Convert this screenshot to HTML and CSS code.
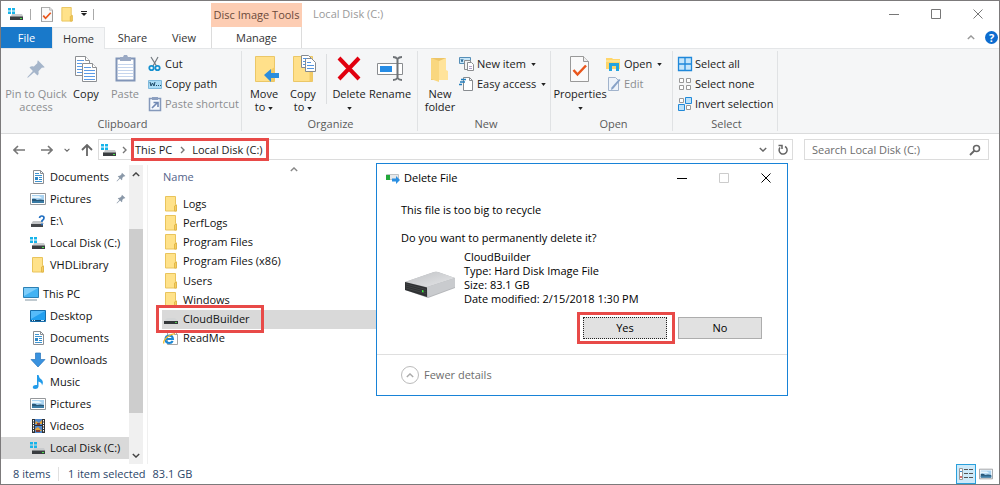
FILE: index.html
```html
<!DOCTYPE html>
<html lang="en">
<head>
<meta charset="utf-8">
<title>Local Disk (C:)</title>
<link rel="stylesheet" href="styles.css">
</head>
<body>
<svg class="sprite" aria-hidden="true">
  <symbol id="disk" viewBox="0 0 16 16">
    <path fill="#c9cbcd" d="M4 8h10l1 2H3z"/><path fill="#3a3d40" d="M2 10h13v4H2z"/><path fill="#85888a" d="M2 10h13v1H2z"/><path fill="#4be34b" d="M12 12h2v1h-2z"/>
    <path fill="#17b4ea" d="M0 2h3v2.500H0zM4 2h3v2.500H4zM0 5.500h3V8H0zM4 5.500h3V8H4z"/>
  </symbol>
  <symbol id="drive" viewBox="0 0 16 16"><path fill="#d3d5d6" d="M4 7h8l3 3H1z"/><path fill="#34383a" d="M1 10h14v3H1z"/><path fill="#50c750" d="M12 11h2v1h-2z"/></symbol>
  <symbol id="drive-q" viewBox="0 0 16 16">
    <path fill="#c4c6c8" d="M3 8h9l2 3H1z"/><path fill="#45484b" d="M1 11h12v3H1z"/>
    <path d="M9.500 5q.3-2 2.300-2 2.200 0 2.200 2 0 1.300-2 2.700v1.300M12 10.500v1.700" fill="none" stroke="#1e6dc0" stroke-width="1.700"/>
  </symbol>
  <symbol id="folder" viewBox="0 0 16 16"><path d="M2.500.5h10v8.200l1 .3v6h-11z" fill="#ffe28a" stroke="#e9c45c"/><path d="M11.500 15v-5l2-1v6z" fill="#f6cd63" stroke="#e2b84a"/></symbol>
  <symbol id="doc" viewBox="0 0 16 16"><path d="M3.500 1.500h7l3 3v10h-10z" fill="#fff" stroke="#8b8f94"/><path d="M10.500 1.500v3h3" fill="none" stroke="#8b8f94"/><path d="M5 4.500h4M5 6.500h7M9 8.500h3M5 12.500h7" stroke="#3f94d0"/><path d="M5 8h3v3H5zM9 10h3v1H9z" fill="#2d87c8"/></symbol>
  <symbol id="picture" viewBox="0 0 16 16"><path d="M.5 2.500h15v11H.5z" fill="#fff" stroke="#95989b"/><path fill="#a9d3f1" d="M2 4h12v8H2z"/><path fill="#e9f6fd" d="M2 5h7l3 2H2z"/><path fill="#2a5878" d="M2 8q3-1 5 1 3-1 7 0v3H2z"/><path fill="#397ba5" d="M2 10h12v2H2z"/></symbol>
  <symbol id="monitor" viewBox="0 0 16 16"><path d="M.5 1.500h15v10H.5z" fill="#43b3f3" stroke="#2c80b4"/><path fill="#7dcdfa" d="M1 2h14L1 10z"/><path fill="#8194a1" d="M2 13.500h12v1H2z"/></symbol>
  <symbol id="desktop" viewBox="0 0 16 16"><path d="M.5 2.500h15v11H.5z" fill="#23a0f0" stroke="#176fae"/><path fill="#56bbfa" d="M1 3h14L1 11z"/><path d="M1 12.500h14" stroke="#10466f"/><path d="M2 12.500h1m1 0h1m6 0h3" stroke="#d1edff"/></symbol>
  <symbol id="down" viewBox="0 0 16 16"><path d="M5.500 1h5v6.500h4.500L8 15 1 7.500h4.500z" fill="#3992df" stroke="#2875bc" stroke-width=".7"/></symbol>
  <symbol id="music" viewBox="0 0 16 16"><path d="M7 1h1.500q.5 3 3 4.500 2.500 2.500.5 6 .1-3-3.500-4v5Q8 15 5 15q-2.500-.2-2.300-2Q3.200 10.500 7 11z" fill="#229bea"/></symbol>
  <symbol id="video" viewBox="0 0 16 16"><path fill="#303234" d="M2 1h13v14H2z"/><path d="M3.500 2v12M13.500 2v12" stroke="#fff" stroke-dasharray="1.500 1"/><path fill="#5189ce" d="M5 1h7v6H5zM5 8h7v7H5z"/><path fill="#e3a43b" d="M6 3l3 2 3-3v4H5zM5 11l3-2 4 4H6z"/><path fill="#823c31" d="M7 5h3v2H7zM6 12h4v2H6z"/></symbol>
  <symbol id="pin" viewBox="0 0 16 16"><path d="M9.500 1l5.500 5.500-1.500.5-.7-.2L10 9.700q.6 2.300-.8 3.500L6.500 10.500 1.500 15l-.5-.5 4.500-5L2.800 6.800Q4 5.400 6.300 6l2.900-2.800L9 2.500z" fill="currentColor"/></symbol>
  <symbol id="ie" viewBox="0 0 16 16"><path d="M4.500 1.500h7l3 3v10h-10z" fill="#fff" stroke="#a6a6a6"/><path d="M11.500 1.500v3h3" fill="none" stroke="#a6a6a6"/><path d="M2.600 9h7.400Q9.700 5.500 6.300 5.500 2.500 5.700 2.500 9.300 2.800 13 6.300 13q2.500 0 3.400-2" fill="none" stroke="#1a86d3" stroke-width="2"/><path d="M1 13.500Q-.5 11 5 6.500 10 2.800 12 4.200" fill="none" stroke="#f1b92b" stroke-width="1.300"/></symbol>
  <symbol id="checkdoc" viewBox="0 0 20 26"><path d="M.5.5h14l5 5v20H.5z" fill="#fafafa" stroke="#8a8a8a" stroke-width="1.500"/><path d="M14.500.5v5h5" fill="#e8e8e8" stroke="#9a9a9a"/><path d="M3.500 15l4 4.500L16.500 10" fill="none" stroke="#e9561c" stroke-width="3"/></symbol>
  <symbol id="caret" viewBox="0 0 6 4"><path d="M0 0h6L3 4z" fill="currentColor"/></symbol>
  <symbol id="up" viewBox="0 0 10 6"><path d="M1 5l4-4 4 4" fill="none" stroke="currentColor" stroke-width="1.700"/></symbol>
  <symbol id="close" viewBox="0 0 10 10"><path d="M.5.5l9 9m0-9l-9 9" stroke="currentColor"/></symbol>
  <symbol id="min" viewBox="0 0 10 10"><path d="M0 5.500h10" stroke="currentColor"/></symbol>
  <symbol id="max" viewBox="0 0 10 10"><path d="M.5.5h9v9h-9z" fill="none" stroke="currentColor"/></symbol>
</svg>

<div class="window">
  <header class="top">
    <div class="left-top">
      <div class="quick">
        <svg class="i16"><use href="#disk"/></svg><span class="bar first"></span>
        <button class="plain" aria-label="Properties"><svg class="qdoc"><use href="#checkdoc"/></svg></button>
        <button class="plain" aria-label="New folder"><svg class="qfolder"><use href="#folder"/></svg></button>
        <button class="plain" aria-label="Customize"><svg width="6" height="6"><path d="M0 .5h6" stroke="#222"/><path d="M0 2h6L3 5z" fill="#222"/></svg></button>
        <span class="bar"></span>
      </div>
      <nav class="tabs"><button class="tab file">File</button><button class="tab home">Home</button><button class="tab share">Share</button><button class="tab view">View</button></nav>
    </div>
    <div class="context"><div class="context-title">Disc Image Tools</div><button class="tab manage">Manage</button></div>
    <h1 class="title">Local Disk (C:)</h1>
    <div class="right-top">
      <div class="winbtns"><button aria-label="Minimize"><svg class="i10"><use href="#min"/></svg></button><button aria-label="Maximize"><svg class="i10"><use href="#max"/></svg></button><button aria-label="Close"><svg class="i10"><use href="#close"/></svg></button></div>
      <div class="helprow"><button class="plain" aria-label="Collapse ribbon"><svg class="chev small"><use href="#up"/></svg></button><button class="help" aria-label="Help">?</button></div>
    </div>
  </header>

  <section class="ribbon">
    <div class="group clipboard">
      <div class="tools">
        <button class="big w64 off"><svg viewBox="0 0 32 32"><path transform="translate(6 5) scale(1.250)" d="M9.500 1l5.500 5.500-1.500.5-.7-.2L10 9.700q.6 2.300-.8 3.500L6.500 10.500 1.500 15l-.5-.5 4.500-5L2.800 6.800Q4 5.400 6.300 6l2.900-2.800L9 2.500z" fill="#a5b5ca"/></svg><span>Pin to Quick<br>access</span></button>
        <button class="big w36"><svg viewBox="0 0 32 32"><g fill="#fff" stroke="#8c8f93"><path d="M5.500 2.500h10l4 4v15h-14z"/><path d="M15.500 2.500v4h4M12.500 9.500h10l4 4v14h-14z"/><path d="M22.500 9.500v4h4"/></g><path d="M7 6.500h7M7 9.500h5M7 12.500h5M7 15.500h5M7 18.500h5M14 13.500h7M14 16.500h11M14 19.500h11M14 22.500h11M14 25.500h11" stroke="#5b9be6"/></svg><span>Copy</span></button>
        <button class="big w42 off"><svg viewBox="0 0 32 32"><path d="M7.500 4.500h18v22h-18z" fill="#fff" stroke="#8195b8" stroke-width="2"/><path d="M11 3h3l1-2h3l1 2h3v4H11z" fill="#9aa9c4"/><path d="M9 10.500h15M9 13.500h15M9 16.500h15M9 19.500h15M9 22.500h15" stroke="#c5d5ed"/></svg><span>Paste</span></button>
        <div class="smalls">
          <button><svg class="i16" viewBox="0 0 16 16"><path d="M4 1l5.500 9M11 1L6 10" stroke="#747a80" stroke-width="1.200"/><circle cx="4.500" cy="12" r="2.200" fill="none" stroke="#1590cf" stroke-width="1.800"/><circle cx="10.500" cy="12" r="2.200" fill="none" stroke="#1590cf" stroke-width="1.800"/></svg>Cut</button>
          <button><svg class="i16" viewBox="0 0 16 16"><path d="M1.500 4.500h13v8h-13z" fill="#aadcf6" stroke="#7fb9dc"/><path d="M3 6l1 4 1.500-3L7 10l1-4M9 9.500h1m1 0h1m1 0h1" stroke="#1d4966" fill="none"/></svg>Copy path</button>
          <button class="off"><svg class="i16" viewBox="0 0 16 16"><path d="M2.500 2.500h11v12h-11z" fill="#f5f8fc" stroke="#8599bb" stroke-width="1.500"/><path d="M5 1h6v3H5z" fill="#8da0c0"/><path d="M5 12l5-5M6.500 6.500H11V11" stroke="#7189b3" stroke-width="1.600" fill="none"/></svg>Paste shortcut</button>
        </div>
      </div><h2>Clipboard</h2>
    </div>
    <div class="group organize">
      <div class="tools">
        <button class="big w40"><svg viewBox="0 0 32 32"><path d="M7.500 2.500h19v25h-19z" fill="#ffe08a" stroke="#ebc767"/><path d="M22.500 16l4-3v14h-4z" fill="#f4cb65"/><path d="M16 21l7-6v4h8v5h-8v4z" fill="#2b8ddd"/></svg><span>Move<br>to <svg class="caret"><use href="#caret"/></svg></span></button>
        <button class="big w38"><svg viewBox="0 0 32 32"><path d="M6.500 2.500h19v25h-19z" fill="#ffe08a" stroke="#ebc767"/><path d="M22.500 16l3-2v13h-3z" fill="#f4cb65"/><g fill="#fff" stroke="#858a91"><path d="M14.500 1.500h7l3 3v9h-10z"/><path d="M18.500 4.500h6l4 4v9h-10z"/></g><path d="M16 4.500h4M16 7.500h2M16 10.500h2M20 8.500h4M20 11.500h7M20 14.500h7" stroke="#5595de"/></svg><span>Copy<br>to <svg class="caret"><use href="#caret"/></svg></span></button>
        <span class="split"></span>
        <button class="big w38"><svg viewBox="0 0 32 32"><path d="M6 4l20 21M26 4L6 25" stroke="#e1000f" stroke-width="4"/></svg><span>Delete<br><svg class="caret"><use href="#caret"/></svg></span></button>
        <button class="big w44"><svg viewBox="0 0 32 32"><path d="M3.500 9.500h25v11h-25z" fill="#fff" stroke="#8a8d90"/><path fill="#268ce5" d="M6 12h12v6H6z"/><path d="M19 3q3 0 4.500 2Q25 3 28 3M23.500 5v20M19 26q3 0 4.500-2 1.500 2 4.500 2" stroke="#6f7377" stroke-width="2" fill="none"/></svg><span>Rename</span></button>
      </div><h2>Organize</h2>
    </div>
    <div class="group new">
      <div class="tools">
        <button class="big w36"><svg viewBox="0 0 32 32"><path d="M7 4h15v22H7z" fill="#edc568"/><path d="M7 4l8 3v21l-8-3z" fill="#f9d77f"/><path d="M15 7l7-3v12l2 1v9h-9z" fill="#ffe39a"/></svg><span>New<br>folder</span></button>
        <div class="smalls">
          <button><svg class="i16" viewBox="0 0 16 16"><path d="M.5 1.500h11v6H.5z" fill="#c7e6f8" stroke="#568fb8"/><path d="M2 3l1 3 1-3" stroke="#356e98" fill="none"/><path d="M5.500 4.500h6v9h-6z" fill="#f4f4f4" stroke="#8b8d90"/><path d="M8.500 6.500h4l2 2v6h-6z" fill="#fff" stroke="#8b8d90"/><path d="M10 10.500h3M10 12.500h3" stroke="#b5a3c7"/></svg>New item <svg class="caret"><use href="#caret"/></svg></button>
          <button><svg class="i16" viewBox="0 0 16 16"><path d="M4.500 1.500h6l3 3v10h-9z" fill="#fff" stroke="#888c90"/><path d="M10.500 1.500v3h3" fill="none" stroke="#888c90"/><path d="M2 3.500h5M1 6h5M0 8.500h3" stroke="#257fbd" stroke-width="1.500"/></svg>Easy access <svg class="caret"><use href="#caret"/></svg></button>
        </div>
      </div><h2>New</h2>
    </div>
    <div class="group open">
      <div class="tools">
        <button class="big w50"><svg viewBox="-6 -2 32 32"><path d="M.5.5h13l5 5v20H.5z" fill="#fafafa" stroke="#999"/><path d="M13.500.5v5h5" fill="#eee" stroke="#999"/><path d="M3.500 14l4 4.500L16 9.500" fill="none" stroke="#e9561c" stroke-width="2.500"/></svg><span>Properties<br><svg class="caret"><use href="#caret"/></svg></span></button>
        <div class="smalls">
          <button><svg class="i16" viewBox="0 0 16 16"><path d="M0 2h6l1 1h7v10H0z" fill="#ffd66b"/><path d="M0 5h14" stroke="#fff0b6"/><path d="M3 7h10v8h-3v-5H6v5H3z" fill="#24a4df"/></svg>Open <svg class="caret"><use href="#caret"/></svg></button>
          <button class="off"><svg class="i16" viewBox="0 0 16 16"><path d="M2.500 1.500h7l3 3v10h-10z" fill="#edf3fa" stroke="#a1b3cc"/><path d="M14.500 4L7 13l-2 1 .5-2.500L13 3z" fill="#87a2c7"/></svg>Edit</button>
        </div>
      </div><h2>Open</h2>
    </div>
    <div class="group select">
      <div class="tools"><div class="smalls">
        <button><svg class="i16" viewBox="0 0 16 16"><path d="M1.500 1.500h13v13h-13zM8 1.500v13M1.500 8h13" fill="#c6e6fb" stroke="#1f88da" stroke-width="1.300"/></svg>Select all</button>
        <button><svg class="i16" viewBox="0 0 16 16"><path d="M2.500 2.500h4v4h-4zM9.500 2.500h4v4h-4zM2.500 9.500h4v4h-4zM9.500 9.500h4v4h-4z" fill="#fff" stroke="#999"/></svg>Select none</button>
        <button><svg class="i16" viewBox="0 0 16 16"><path d="M2.500 2.500h4v4h-4zM9.500 9.500h4v4h-4z" fill="#fff" stroke="#999"/><path d="M8.500 1.500h6v6h-6zM1.500 8.500h6v6h-6z" fill="#bce2fb" stroke="#2189d8"/></svg>Invert selection</button>
      </div></div><h2>Select</h2>
    </div>
  </section>

  <div class="navrow">
    <div class="arrows">
      <button class="plain" aria-label="Back"><svg width="12" height="10"><path d="M12 5H1M5 1L1 5l4 4" fill="none" stroke="#777" stroke-width="1.600"/></svg></button>
      <button class="plain forward" aria-label="Forward"><svg width="12" height="10"><path d="M0 5h11M7 1l4 4-4 4" fill="none" stroke="#777" stroke-width="1.600"/></svg></button>
      <button class="plain" aria-label="Recent"><svg class="chev tiny flip"><use href="#up"/></svg></button>
      <button class="plain" aria-label="Up"><svg width="12" height="12"><path d="M6 12V1M1 6l5-5 5 5" fill="none" stroke="#666" stroke-width="1.800"/></svg></button>
    </div>
    <div class="address">
      <svg class="i16"><use href="#disk"/></svg>
      <svg class="sep" viewBox="0 0 5 8"><path d="M1 1l3 3-3 3" fill="none" stroke="#777" stroke-width="1.400"/></svg>
      <div class="crumbs callout"><button>This PC</button><svg class="sep" viewBox="0 0 5 8"><path d="M1 1l3 3-3 3" fill="none" stroke="#777" stroke-width="1.400"/></svg><button>Local Disk (C:)</button></div>
      <button class="plain history" aria-label="Previous locations"><svg class="chev small flip"><use href="#up"/></svg></button>
      <button class="plain refresh" aria-label="Refresh"><svg width="12" height="12"><path d="M8 2.500A4 4 0 1 1 3 3.500M1.500 1.500H5V5" fill="none" stroke="#666" stroke-width="1.500"/></svg></button>
    </div>
    <label class="search"><input type="text" placeholder="Search Local Disk (C:)" aria-label="Search Local Disk (C:)"><svg width="12" height="12"><circle cx="7.500" cy="4.500" r="3" fill="none" stroke="#666" stroke-width="1.500"/><path d="M5.500 6.500L1 11" stroke="#666" stroke-width="1.800"/></svg></label>
  </div>

  <main class="main">
    <aside class="side">
      <ul class="tree">
        <li><svg class="i16"><use href="#doc"/></svg><span>Documents</span><svg class="pin"><use href="#pin"/></svg></li>
        <li><svg class="i16"><use href="#picture"/></svg><span>Pictures</span><svg class="pin"><use href="#pin"/></svg></li>
        <li><svg class="i16"><use href="#drive-q"/></svg><span>E:\</span></li>
        <li><svg class="i16"><use href="#disk"/></svg><span>Local Disk (C:)</span></li>
        <li><svg class="i16"><use href="#folder"/></svg><span>VHDLibrary</span></li>
      </ul>
      <ul class="tree">
        <li class="root"><svg class="i16"><use href="#monitor"/></svg><span>This PC</span></li>
        <li><svg class="i16"><use href="#desktop"/></svg><span>Desktop</span></li>
        <li><svg class="i16"><use href="#doc"/></svg><span>Documents</span></li>
        <li><svg class="i16"><use href="#down"/></svg><span>Downloads</span></li>
        <li><svg class="i16"><use href="#music"/></svg><span>Music</span></li>
        <li><svg class="i16"><use href="#picture"/></svg><span>Pictures</span></li>
        <li><svg class="i16"><use href="#video"/></svg><span>Videos</span></li>
        <li class="sel"><svg class="i16"><use href="#disk"/></svg><span>Local Disk (C:)</span></li>
      </ul>
    </aside>
    <div class="scroll"><svg class="chev small"><use href="#up"/></svg><div class="track"><div class="thumb"></div></div><svg class="chev small flip"><use href="#up"/></svg></div>
    <section class="files">
      <div class="colhead"><span>Name</span><svg class="chev small"><use href="#up"/></svg></div>
      <ul class="list">
        <li><svg class="i16"><use href="#folder"/></svg>Logs</li>
        <li><svg class="i16"><use href="#folder"/></svg>PerfLogs</li>
        <li><svg class="i16"><use href="#folder"/></svg>Program Files</li>
        <li><svg class="i16"><use href="#folder"/></svg>Program Files (x86)</li>
        <li><svg class="i16"><use href="#folder"/></svg>Users</li>
        <li><svg class="i16"><use href="#folder"/></svg>Windows</li>
        <li class="sel"><div class="callout item"><svg class="i16"><use href="#drive"/></svg>CloudBuilder</div></li>
        <li><svg class="i16"><use href="#ie"/></svg>ReadMe</li>
      </ul>
    </section>

    <div class="dialog" role="dialog" aria-labelledby="dlg-title">
      <div class="dlg-head">
        <svg class="i16" viewBox="0 0 16 16"><path d="M1.500 4.500h12v5h-12z" fill="#e6e8ea" stroke="#bfc3c6"/><path fill="#22a83a" d="M1 5h4v5H1z"/><path d="M7 8.500h4V6l4 4-4 4v-2.500H7z" fill="#2b8fe2"/></svg>
        <span id="dlg-title">Delete File</span>
        <div class="winbtns dark"><button aria-label="Minimize"><svg class="i10"><use href="#min"/></svg></button><button class="dim" disabled aria-label="Maximize"><svg class="i10"><use href="#max"/></svg></button><button aria-label="Close"><svg class="i10"><use href="#close"/></svg></button></div>
      </div>
      <div class="dlg-body">
        <p>This file is too big to recycle</p>
        <p class="ask">Do you want to permanently delete it?</p>
        <div class="info">
          <svg class="bigdrive" viewBox="0 0 52 28"><defs><linearGradient id="g" x1="0" y1="0" x2="1" y2="1"><stop offset="0" stop-color="#bfc1c4"/><stop offset="1" stop-color="#e6e7e9"/></linearGradient></defs><path d="M1 11L30 1q2-.5 4 0l17 6v10L24 27 1 19z" fill="#b5b7ba"/><path d="M1 11L30 1q2-.5 4 0l17 6-28 9z" fill="url(#g)"/><path d="M23 16l28-9v9L24 26z" fill="#c9cbce"/><path d="M1 11l22 5.500V26L1 19z" fill="#2f3133"/><path d="M2 13l20 5.500M2 15l20 5.500M2 17l20 5.500" stroke="#4c4f51" stroke-width=".6"/><path d="M18 19l1.500.5v2L18 21z" fill="#3df53d"/></svg>
          <div class="facts"><div>CloudBuilder</div><div>Type: Hard Disk Image File</div><div>Size: 83.1 GB</div><div>Date modified: 2/15/2018 1:30 PM</div></div>
        </div>
        <div class="actions"><span class="callout yeswrap"><button class="btn yes">Yes</button></span><button class="btn">No</button></div>
      </div>
      <div class="dlg-foot"><button class="fewer"><span class="ring"><svg class="chev small"><use href="#up"/></svg></span>Fewer details</button></div>
    </div>
  </main>

  <footer class="status">
    <span class="count">8 items</span><span class="chosen">1 item selected</span><span>83.1 GB</span>
    <div class="views">
      <button class="active" aria-label="Details"><svg width="18" height="14"><path d="M2.500 1.500h3v11h-3z" fill="#fff" stroke="#9a9a9a"/><path d="M7 2.500h4m1 0h4M7 6.500h4m1 0h4M7 10.500h4m1 0h4" stroke="#555"/><path d="M3 4h2v1H3z" fill="#3a86c8"/><path d="M3 9h2v2H3z" fill="#d26e6e"/></svg></button>
      <button aria-label="Large icons"><svg width="14" height="14"><use href="#picture"/></svg></button>
    </div>
  </footer>
</div>
</body>
</html>
```
FILE: styles.css
```css
* { box-sizing: border-box; }
body { margin: 0; background: #fff; color: #1b1b1b; font: 11px/14px "Open Sans", "Noto Sans", sans-serif; }
button { font: inherit; color: inherit; background: none; border: 0; padding: 0; margin: 0; }
ul, p, h1, h2 { margin: 0; padding: 0; list-style: none; font: inherit; }
svg { display: block; flex: none; }
.sprite { position: absolute; width: 0; height: 0; }
.window { display: flex; flex-direction: column; min-height: 100vh; border: 1px solid #7c7a7b; }
.i16 { width: 16px; height: 16px; }
.i10 { width: 10px; height: 10px; }
.chev { width: 9px; height: 6px; color: #666; }
.chev.small { width: 8px; height: 5px; }
.chev.tiny { width: 6px; height: 4px; }
.flip { transform: rotate(180deg); }
.plain { display: flex; align-items: center; justify-content: center; }

/* title bar and tabs */
.top { display: flex; height: 48px; border-bottom: 1px solid #e4e6e8; }
.left-top { width: 210px; display: flex; flex-direction: column; justify-content: space-between; }
.quick { display: flex; align-items: center; gap: 6px; height: 26px; padding: 0 0 0 7px; }
.bar { width: 1px; height: 11px; background: #aaa; }
.bar.first { margin-right: 4px; }
.qdoc { width: 12px; height: 15px; }
.qfolder { width: 16px; height: 15px; }
.tabs { display: flex; height: 21px; }
.tab { height: 21px; color: #333; }
.tab.file { width: 51px; background: #1979ca; color: #fff; }
.tab.home { width: 53px; height: 22px; background: #f5f6f7; border: 1px solid #e4e6e8; border-bottom: 0; }
.tab.share { width: 55px; }
.tab.view { width: 48px; }
.context { display: flex; flex-direction: column; width: 91px; margin-top: 2px; }
.context-title { height: 24px; line-height: 24px; background: #fdcdb3; color: #6b4a3a; text-align: center; white-space: nowrap; }
.tab.manage { border: 1px solid #dcdcdc; border-width: 0 1px; }
.title { margin-left: 11px; line-height: 26px; color: #999; }
.right-top { margin-left: auto; display: flex; flex-direction: column; align-items: flex-end; }
.winbtns { display: flex; height: 25px; color: #777; }
.winbtns button { width: 42px; display: flex; align-items: center; justify-content: center; }
.winbtns.dark { margin-left: auto; color: #000; }
.winbtns .dim { color: #ccc; }
.helprow { display: flex; align-items: center; gap: 10px; height: 22px; padding-right: 1px; }
.helprow .chev { color: #999; }
.help { width: 13px; height: 13px; border-radius: 50%; background: #0c6ccf; color: #fff; font-weight: bold; line-height: 13px; }

/* ribbon */
.ribbon { display: flex; height: 85px; background: #f5f6f7; border-bottom: 1px solid #dadbdc; padding: 2px 0; }
.group { display: flex; flex-direction: column; justify-content: space-between; border-right: 1px solid #e0e2e4; padding-top: 3px; }
.group h2 { text-align: center; color: #5a5a5a; line-height: 14px; }
.tools { display: flex; height: 60px; }
.clipboard { width: 241px; padding-left: 3px; }
.organize { width: 176px; padding-left: 2px; }
.new { width: 133px; padding-left: 4px; }
.open { width: 122px; padding-left: 4px; }
.select { width: 105px; padding-left: 3px; }
.big { display: flex; flex-direction: column; align-items: center; white-space: nowrap; line-height: 13px; }
.big > svg { width: 32px; height: 32px; margin-bottom: 1px; }
.w64 { width: 64px; } .w50 { width: 50px; } .w44 { width: 44px; } .w42 { width: 42px; } .w40 { width: 40px; } .w38 { width: 38px; } .w36 { width: 36px; }
.off { color: #8b8d90; }
.caret { display: inline-block; width: 5px; height: 3px; vertical-align: middle; color: #222; }
.split { width: 1px; height: 50px; margin: 0 3px 0 4px; background: #dcdee0; }
.smalls { display: flex; flex-direction: column; margin-left: 1px; }
.smalls button { display: flex; align-items: center; gap: 2px; height: 20px; white-space: nowrap; }
.smalls .caret { margin-left: 3px; }

/* navigation */
.navrow { display: flex; align-items: center; height: 31px; padding-right: 10px; }
.arrows { display: flex; align-items: center; gap: 11px; width: 97px; padding-left: 12px; }
.forward { margin-left: 5px; }
.address { display: flex; align-items: center; flex: 1; height: 21px; border: 1px solid #dcdcdc; }
.address > .i16 { margin-left: 2px; }
.sep { width: 5px; height: 8px; margin: 0 5px; }
.callout { position: relative; }
.callout::after { content: ""; position: absolute; border: 3px solid #e84a48; pointer-events: none; }
.crumbs { display: flex; align-items: center; height: 21px; padding: 0 3px; }
.crumbs::after { inset: -1px -3px -1px -1px; }
.crumbs .sep { margin: 0 7px 0 8px; }
.history { width: 20px; height: 19px; margin-left: auto; }
.refresh { width: 19px; height: 19px; border-left: 1px solid #dcdcdc; }
.search { display: flex; align-items: center; width: 185px; height: 21px; margin-left: 11px; padding: 0 7px; border: 1px solid #dcdcdc; }
.search input { flex: 1; min-width: 0; border: 0; padding: 0; outline: 0; font: inherit; background: none; }
.search input::placeholder { color: #6d6d6d; opacity: 1; }

/* panes */
.main { position: relative; display: flex; flex: 1; color: #111; }
.side { width: 128px; padding-top: 1px; }
.tree + .tree { margin-top: 7px; }
.tree li { display: flex; align-items: center; gap: 4px; height: 22px; padding-left: 29px; white-space: nowrap; }
.tree .root { padding-left: 22px; }
.sel { background: #d9d9d9; }
.pin { width: 10px; height: 10px; margin: 0 3px 0 auto; color: #8a98a8; }
.scroll { display: flex; flex-direction: column; align-items: center; width: 14px; background: #f0f0f0; padding: 7px 0 6px; }
.scroll .chev { color: #444; }
.track { flex: 1; align-self: stretch; padding: 52px 0 40px; }
.thumb { height: 100%; background: #cdcdcd; }
.files { flex: 1; margin-left: 4px; border-left: 1px solid #f0f0f0; }
.colhead { display: flex; width: 160px; height: 29px; padding: 5px 0 0 15px; color: #53648a; }
.colhead .chev { margin: -3px 10px 0 auto; color: #888; }
.list { display: grid; grid-auto-rows: 1fr; height: 154px; width: 240px; margin-left: 14px; }
.list li, .item { display: flex; align-items: center; gap: 4px; padding-left: 1px; }
.list li.sel { padding-left: 0; }
.item::after { inset: -6px -14px -6px -6px; }

/* dialog */
.dialog { position: absolute; left: 375px; top: -2px; width: 412px; background: #fff; border: 1px solid #1883d7; color: #000; }
.dlg-head { display: flex; align-items: center; gap: 3px; height: 27px; padding-left: 8px; }
.dlg-body { padding: 12px 25px 15px 24px; }
.ask { margin-top: 14px; }
.info { display: flex; margin-top: 5px; }
.bigdrive { width: 52px; height: 28px; margin: 21px 8px 0 3px; }
.facts { line-height: 14px; }
.actions { display: flex; justify-content: flex-end; gap: 11px; margin-top: 11px; }
.btn { width: 84px; height: 22px; background: #e1e1e1; border: 1px solid #adadad; }
.btn.yes { border: 1px dotted #222; }
.yeswrap::after { inset: -5px -8px -5px -6px; }
.dlg-foot { border-top: 1px solid #dfdfdf; padding: 11px 24px; }
.fewer { display: flex; align-items: center; gap: 5px; color: #6d6d6d; }
.ring { display: flex; align-items: center; justify-content: center; width: 18px; height: 18px; border: 1px solid #bbb; border-radius: 50%; }
.ring .chev { color: #aaa; }

/* status */
.status { display: flex; align-items: center; height: 20px; padding-left: 12px; color: #2b4568; }
.count { width: 46px; border-right: 1px solid #e0e0e0; }
.chosen { margin: 0 7px 0 9px; }
.views { display: flex; margin-left: auto; padding-right: 3px; }
.views button { width: 20px; height: 20px; display: flex; align-items: center; justify-content: center; }
.views .active { background: #cdeafa; border: 1px solid #2aa0dc; }
```
